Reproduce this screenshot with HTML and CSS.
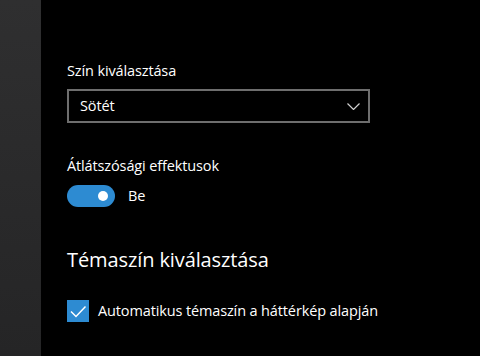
FILE: index.html
```html
<!DOCTYPE html>
<html lang="hu">
<head>
  <meta charset="UTF-8" />
  <meta name="viewport" content="width=device-width, initial-scale=1.0"/>
  <title>Színek</title>
  <link rel="stylesheet" href="styles.css">
</head>
<body>
  <div class="sidebar"></div>
  <div class="content">
    <!-- Colour mode -->
    <div class="label">Szín kiválasztása</div>
    <div class="select">
      <span>Sötét</span>
      <svg class="chevron" width="13" height="7" viewBox="0 0 13 7">
        <polyline points="0.5,0.5 6.5,6.5 12.5,0.5" fill="none" stroke="#d0d0d0" stroke-width="1.2"/>
      </svg>
    </div>

    <!-- Transparency -->
    <div class="label label-gap">Átlátszósági effektusok</div>
    <div class="toggle-row">
      <div class="toggle"><div class="knob"></div></div>
      <span>Be</span>
    </div>

    <!-- Accent colour -->
    <h2 class="heading">Témaszín kiválasztása</h2>
    <div class="check-row">
      <div class="checkbox">
        <svg width="22" height="22" viewBox="0 0 22 22">
          <polyline points="4,11.5 9,16.5 18.5,6.5" fill="none" stroke="#fff" stroke-width="1.5"/>
        </svg>
      </div>
      <span>Automatikus témaszín a háttérkép alapján</span>
    </div>
  </div>
</body>
</html>
```

FILE: styles.css
```css
body {
  margin: 0;
  height: 356px;
  display: flex;
  background: #000;
  color: #fff;
  font-family: "Open Sans", "Noto Sans", sans-serif;
  font-size: 14.5px;
  letter-spacing: -0.13px;
  line-height: 20px;
  overflow: hidden;
}

.sidebar {
  width: 41px;
  flex-shrink: 0;
  background: linear-gradient(#2f2f30, #252526);
}

.content {
  padding: 61px 0 0 26px;
}

.label {
  margin-bottom: 8px;
}
.label-gap {
  margin-top: 33px;
  margin-bottom: 9px;
}

/* Dropdown */
.select {
  box-sizing: border-box;
  width: 303px;
  height: 34px;
  border: 2px solid #6e6e6e;
  display: flex;
  align-items: center;
  justify-content: space-between;
  padding: 0 8px 0 11px;
}

/* Toggle switch */
.toggle-row {
  display: flex;
  align-items: center;
  gap: 13px;
  height: 22px;
}
.toggle {
  width: 48px;
  height: 22px;
  border-radius: 11px;
  background: #2d8bd2;
  display: flex;
  align-items: center;
  justify-content: flex-end;
  padding-right: 7px;
  box-sizing: border-box;
}
.knob {
  width: 10px;
  height: 10px;
  border-radius: 50%;
  background: #fff;
}

.heading {
  margin: 39px 0 26px;
  font-size: 20px;
  letter-spacing: -0.1px;
  font-weight: normal;
  line-height: 28px;
}

/* Checkbox */
.check-row {
  display: flex;
  align-items: center;
  gap: 9px;
}
.checkbox {
  width: 22px;
  height: 22px;
  background: #2d8bd2;
}
.checkbox svg {
  display: block;
}
```
